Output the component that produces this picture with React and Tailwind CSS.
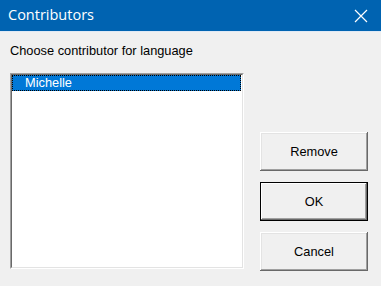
export default function App() {
  const buttons = ['Remove', 'OK', 'Cancel'];

  return (
    <div className="w-[381px] h-[286px] bg-[#f0f0f0] overflow-hidden" style={{ fontFamily: '"Liberation Sans", Arial, sans-serif' }}>
      {/* Title bar */}
      <div className="h-[32px] bg-[#0063b1] flex items-center justify-between pl-[8px] pr-[13px] border-b border-[#dfe9f5]">
        <span className="text-white text-[14.5px] leading-none" style={{ fontFamily: '"Open Sans", "Noto Sans", sans-serif' }}>Contributors</span>
        <svg width="14" height="14" viewBox="0 0 14 14">
          <path d="M1 1 L13 13 M13 1 L1 13" stroke="white" strokeWidth="1.2" />
        </svg>
      </div>

      {/* Body */}
      <div className="px-[10px] pt-[11px]">
        <p className="text-[12.8px] leading-[16px] text-black">Choose contributor for language</p>

        <div className="flex mt-[14px]">
          {/* Listbox */}
          <div className="w-[234px] h-[196px] border border-t-[#a0a0a0] border-l-[#a0a0a0] border-b-white border-r-white">
            <div className="h-full border border-t-[#696969] border-l-[#696969] border-b-[#e3e3e3] border-r-[#e3e3e3] bg-white">
              <div className="h-[16px] bg-[#0078d7] border border-dotted border-black mr-[1px] flex items-center pl-[12px]">
                <span className="text-white text-[12.8px] leading-none">Michelle</span>
              </div>
            </div>
          </div>

          {/* Buttons */}
          <div className="flex flex-col gap-[11px] ml-[16px] pt-[59px]">
            {buttons.map((b) => (
              <div
                key={b}
                className={`w-[108px] h-[39px] flex items-center justify-center text-[12.8px] text-black bg-[#f0f0f0] ${
                  b === 'OK'
                    ? 'border border-black shadow-[inset_-1px_-1px_#696969,inset_1px_1px_#fff,inset_-2px_-2px_#a0a0a0]'
                    : 'shadow-[inset_-1px_-1px_#696969,inset_1px_1px_#fff,inset_-2px_-2px_#a0a0a0,inset_2px_2px_#e3e3e3]'
                }`}
              >
                {b}
              </div>
            ))}
          </div>
        </div>
      </div>
    </div>
  );
}
